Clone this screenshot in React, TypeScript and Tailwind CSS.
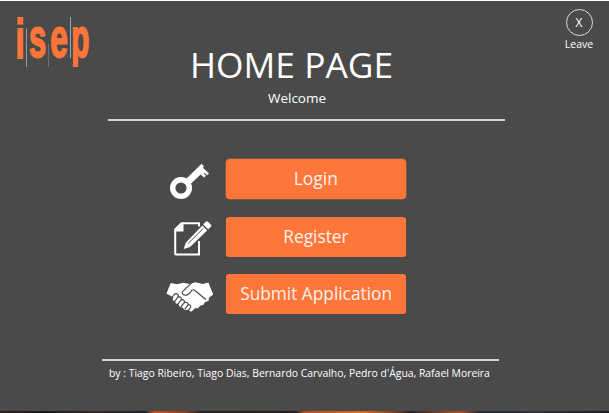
import type { ReactNode } from "react";

const strip =
  "bg-[linear-gradient(90deg,#30201c_0px,#191a20_45px,#332622_90px,#20242e_145px,#c4561c_155px,#8a3c1a_185px,#2b2120_200px,#241c1c_295px,#b5541f_305px,#d8661f_365px,#7c3b1b_395px,#252025_410px,#b05321_460px,#232833_480px,#30303a_540px,#1c1c22_609px)]";

function Logo() {
  return (
    <svg className="ml-3.5 mt-3 h-[58px] w-20 shrink-0 overflow-visible" viewBox="14 12 80 58" role="img" aria-label="isep">
      <clipPath id="descender"><path d="M70 10h25v56H70z" /></clipPath>
      <g fill="#ff7539" stroke="#ff7539" strokeWidth="1.8" fontFamily="'Liberation Sans Narrow', 'Liberation Sans', sans-serif" fontWeight="700" fontSize="55">
        <text transform="translate(15.4 56.7) scale(.6 1)">i</text>
        <text transform="translate(28.9 56.4) scale(.565 1)">s</text>
        <text transform="translate(50.2 56.4) scale(.575 1)">e</text>
        <g clipPath="url(#descender)">
          <text transform="translate(71.3 56.4) scale(.54 1)">p</text>
        </g>
      </g>
      <path d="M26.5 27v39" stroke="#8d9da6" />
      <path d="M48.5 43v23" stroke="#637482" />
      <path d="M70.5 16v41" stroke="#80aecd" />
    </svg>
  );
}

function KeyIcon() {
  return (
    <svg className="h-[38px] w-[42px]" viewBox="169 162 42 38">
      <circle cx="181" cy="188" r="8.3" fill="none" stroke="white" strokeWidth="5.4" />
      <path d="M185 180 201.5 163.8 204 166.2 202.8 167.8 209 173.3 207.3 175.2 204.6 172.9 203.7 173.8 206 175.7 204.2 177.5 200.6 174.6 190 184.5Z" fill="white" />
    </svg>
  );
}

function RegisterIcon() {
  return (
    <svg className="h-[36px] w-[40px]" viewBox="173 221 40 36">
      <path d="M199 226.5V223.2H181.5L175.2 229.5V253.8Q175.2 254.4 175.8 254.4H199V241" fill="none" stroke="white" strokeWidth="2" />
      <path d="M183.5 222.5V231.5H174.5Z" fill="white" />
      <path d="m203.6 224.3 2.1-2.1q1.3-1 2.5.2l2.1 2.1q1.2 1.2.1 2.3l-2.1 2.1Z" fill="white" stroke="white" strokeLinejoin="round" />
      <path d="m202.4 225.6 4.8 4.9-17.2 16.4-6.3 2.2 2.1-6.3Z" fill="white" />
      <path d="m188 243.6 15-15" stroke="#4a4a4a" strokeWidth="1" />
    </svg>
  );
}

function HandshakeIcon() {
  return (
    <svg className="h-[32px] w-[50px]" viewBox="165 280 50 32">
      <path d="m170.8 282 6.2 1.3 6.2-1.5 6.5 1.2 5.5-1.7 7.6 1.7 5.6-1.4 4.8 11.8-4.2 3.4-.5 3.3-3.4.8-1.8 3-3 .7-2.2 2.7-3.1-.1-3.6 3.5-3.8-2-2.8.4-2.3-2.5-2.8-.8-1.1-2.6-2.8-.7-1-2.5-2.2-.6.5-3.2-6.7-3.7Z" fill="white" />
      <g fill="none" stroke="#4a4a4a" strokeWidth="1.2" strokeLinecap="round" strokeLinejoin="round">
        <path d="m191.2 282.4-8 7.5q-1.8 1.6-.9 2.8 1.8 2.5 5.4.9 2.4-1.1 4.3-4.6h2.3l11.2 9.3" />
        <path d="m171 298 3.5-4.8q1.7-1.4 3.5.5.8 1.2-.1 2.4l-3.3 4.6M177.8 296.3q1.6-1.1 3.1.3 1.1 1.4 0 2.7l-3.3 4M181 299q1.7-1.1 3 .3 1.1 1.2.1 2.6l-3 3.6M184.5 301.8q1.9-1.2 3.2.2.9 1.2-.1 2.6l-2.6 3.2M188 303.8q1.5-.4 2.5.9.7 1.3-.3 2.4l-2.2 2.6" />
      </g>
    </svg>
  );
}

function Action({ icon, children, outlined = false }: { icon: ReactNode; children: ReactNode; outlined?: boolean }) {
  return (
    <div className="flex h-10 items-center">
      <div className="flex w-[61px] items-center justify-center pr-[11px]">{icon}</div>
      <button className={`flex h-10 w-[180px] items-center justify-center rounded-[3px] bg-[#ff763b] pb-px text-[18px] text-[#fff1e9] ${outlined ? "outline outline-[#7b5546]" : ""}`}>
        {children}
      </button>
    </div>
  );
}

export default function App() {
  return (
    <main className="flex h-[413px] w-[609px] flex-col overflow-hidden border-t border-white bg-[#4a4a4a] font-['Open_Sans','Noto_Sans',sans-serif] text-white">
      <header className="flex h-[117px] shrink-0 items-start">
        <Logo />
        <div className="flex w-[396px] flex-col items-center pt-[41px]">
          <h1 className="h-[46px] origin-center scale-x-[1.01] whitespace-nowrap text-[35px] leading-[46px]">HOME PAGE</h1>
          <p className="ml-[10px] h-5 text-[13.5px] leading-5">Welcome</p>
        </div>
        <button className="ml-auto mr-[14px] mt-2 flex w-8 flex-col items-center">
          <span className="flex h-[27px] w-[27px] shrink-0 items-center justify-center rounded-full border border-[#dddddd] text-[12px]">X</span>
          <span className="mt-[1px] text-[10.5px] leading-[14px]">Leave</span>
        </button>
      </header>
      <div className="ml-[108px] mt-px h-[2px] w-[397px] shrink-0 bg-[#d3d3d3]" />
      <section className="ml-[165px] mt-[38px] flex flex-col">
        <Action icon={<span className="mt-[4px]"><KeyIcon /></span>} outlined><span className="scale-x-[.97]">Login</span></Action>
        <div className="h-[18px]" />
        <Action icon={<span className="ml-[6px] mt-[3px]"><RegisterIcon /></span>}><span className="scale-x-[.96]">Register</span></Action>
        <div className="h-[17px]" />
        <Action icon={<span className="mt-[5px]"><HandshakeIcon /></span>}><span className="scale-x-[.96] whitespace-nowrap">Submit Application</span></Action>
      </section>
      <div className="ml-[102px] mt-[45px] h-[2px] w-[397px] shrink-0 bg-[#d3d3d3]" />
      <footer className="ml-[109px] mt-[3px] h-[18px] w-[381px] whitespace-nowrap text-[11px] leading-[18px]">
        <span className="inline-block origin-left scale-x-[.945]">by : Tiago Ribeiro, Tiago Dias, Bernardo Carvalho, Pedro d'Água, Rafael Moreira</span>
      </footer>
      <div className={`mt-auto h-[2px] w-full shrink-0 ${strip}`} />
    </main>
  );
}
